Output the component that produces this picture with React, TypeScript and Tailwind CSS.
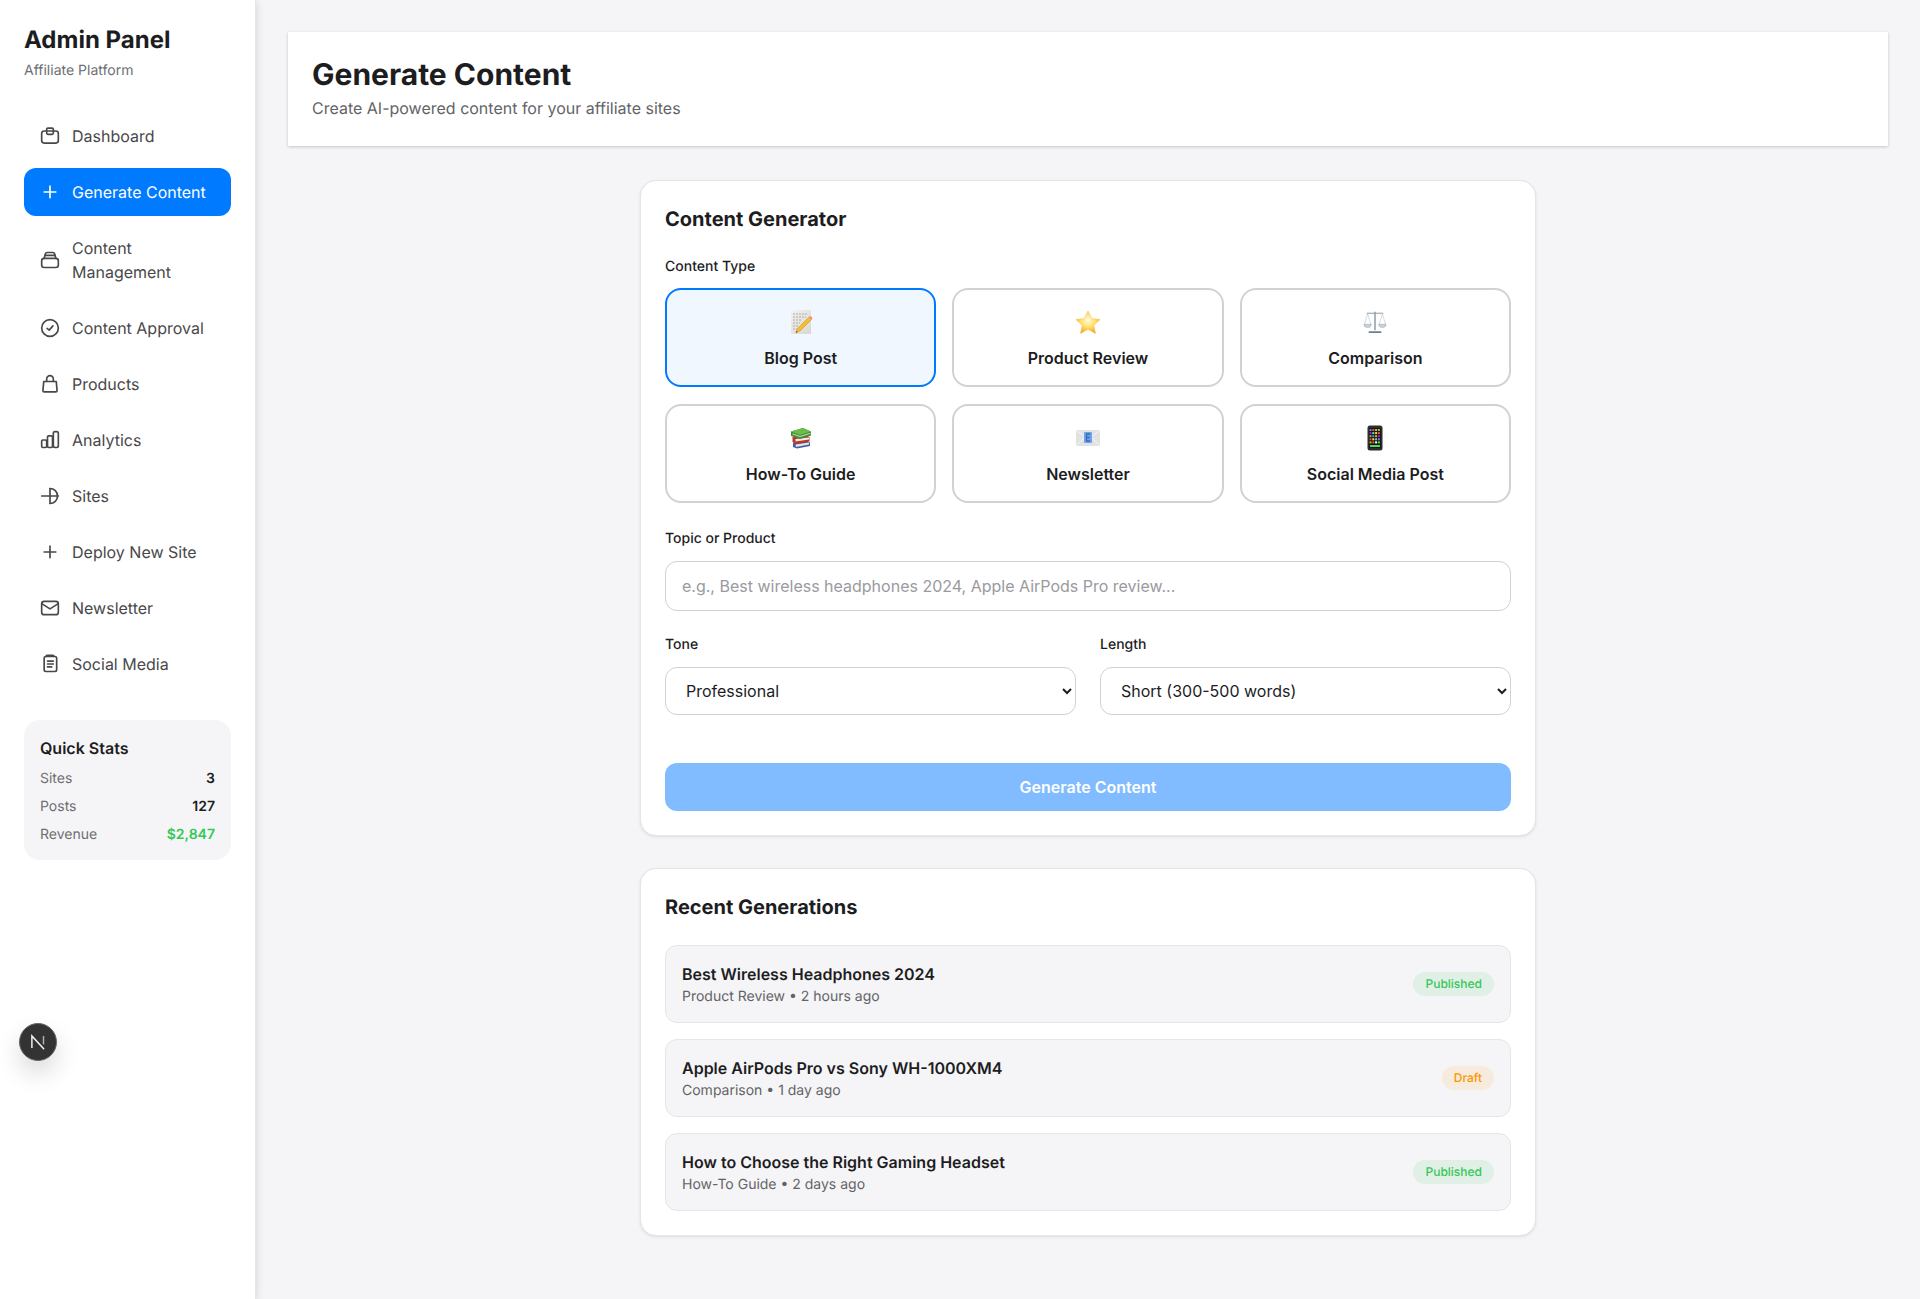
import React from 'react';

const iconProps = {
  width: 20,
  height: 20,
  viewBox: '0 0 24 24',
  fill: 'none',
  stroke: 'currentColor',
  strokeWidth: 2,
  strokeLinecap: 'round' as const,
  strokeLinejoin: 'round' as const,
};

const DashboardIcon = () => (
  <svg {...iconProps}>
    <rect x="2" y="6" width="20" height="14.500" rx="3" />
    <rect x="8" y="2.500" width="8" height="7.500" rx="1.500" />
  </svg>
);
const PlusIcon = () => (
  <svg {...iconProps}>
    <path d="M12 5v14M5 12h14" />
  </svg>
);
const StackIcon = () => (
  <svg {...iconProps}>
    <rect x="2" y="10" width="20" height="11" rx="3" />
    <path d="M5 10l1.500-5.500a2 2 0 0 1 2-1.500h7a2 2 0 0 1 2 1.500L19 10" />
    <path d="M6 6.500h12" />
  </svg>
);
const CheckCircleIcon = () => (
  <svg {...iconProps}>
    <circle cx="12" cy="12" r="10" />
    <path d="M8.500 12.500l2.500 2 4.500-5" />
  </svg>
);
const BagIcon = () => (
  <svg {...iconProps}>
    <path d="M4.500 9h15l1 11a1.500 1.500 0 0 1-1.500 1.500H5A1.500 1.500 0 0 1 3.500 20z" />
    <path d="M8 9V6a4 4 0 0 1 8 0v3" />
  </svg>
);
const BarsIcon = () => (
  <svg {...iconProps}>
    <rect x="2" y="12" width="6" height="9" rx="1.500" />
    <rect x="9" y="7" width="6" height="14" rx="1.500" />
    <rect x="16" y="2" width="6" height="19" rx="2" />
  </svg>
);
const SitesIcon = () => (
  <svg {...iconProps}>
    <path d="M2 12h20" />
    <path d="M12 3v18" />
    <path d="M12 3a9 9 0 0 1 0 18" />
  </svg>
);
const MailIcon = () => (
  <svg {...iconProps}>
    <rect x="2" y="4" width="20" height="16" rx="3" />
    <path d="M2.500 7l9.500 6 9.500-6" />
  </svg>
);
const ClipboardIcon = () => (
  <svg {...iconProps}>
    <rect x="5" y="3" width="15" height="18" rx="2" />
    <path d="M7.500 3V2.500a1 1 0 0 1 1-1h7a1 1 0 0 1 1 1V3" />
    <path d="M9 8.500h7M9 12h7M9 15.500h5" />
  </svg>
);

const BlogEmoji = () => (
  <svg width="24" height="26" viewBox="0 0 24 26">
    <defs>
      <linearGradient id="paper" x1="0" y1="0" x2="1" y2="1">
        <stop offset="0" stopColor="#f4f2ee" />
        <stop offset="1" stopColor="#d9d7d3" />
      </linearGradient>
    </defs>
    <rect x="2" y="1" width="20" height="24" fill="url(#paper)" />
    <path d="M4 5h15M4 8h13M4 11h9M4 14h7M4 17h6M4 20h8" stroke="#9c9c9c" strokeWidth="0.800" strokeDasharray="2 1" />
    <path d="M8.500 19.500l-1.700 4.200 4.200-1.700 11.500-11.500-2.500-2.500z" fill="#f6bd2c" stroke="#c98a12" strokeWidth="0.500" />
    <path d="M20 8l2.500 2.500 1.200-1.300-2.500-2.500z" fill="#ee8a96" />
    <path d="M7.500 21.900l-.7 1.800 1.800-.7z" fill="#333" />
  </svg>
);
const StarEmoji = () => (
  <svg width="26" height="24" viewBox="0 0 26 24">
    <defs>
      <radialGradient id="star" cx="0.500" cy="0.420" r="0.620">
        <stop offset="0" stopColor="#fffbe0" />
        <stop offset="0.500" stopColor="#ffe066" />
        <stop offset="1" stopColor="#f59a0c" />
      </radialGradient>
    </defs>
    <path d="M13 1l3.600 7.600 8.400 1-6.200 5.700 1.700 8.200L13 19.200 5.500 23.500l1.700-8.200L1 9.600l8.400-1z" fill="url(#star)" stroke="#f6bf62" strokeWidth="0.600" strokeLinejoin="round" />
  </svg>
);
const ScalesEmoji = () => (
  <svg width="24" height="24" viewBox="0 0 26 26" fill="none">
    <path d="M13 2v20" stroke="#7d8c9b" strokeWidth="1.400" />
    <path d="M4 3.500h18" stroke="#8f9daa" strokeWidth="1.100" />
    <path d="M7 24h12" stroke="#6f7f8f" strokeWidth="2" strokeLinecap="round" />
    <path d="M5 4L1.500 16M5 4l3.500 12M21 4l-3.500 12M21 4l3.500 12" stroke="#b4bec8" strokeWidth="0.600" />
    <path d="M1 15.500h8a4 3.500 0 0 1-8 0zM17 15.500h8a4 3.500 0 0 1-8 0z" fill="#cbd4dc" stroke="#8a98a6" strokeWidth="0.500" />
  </svg>
);
const BooksEmoji = () => (
  <svg width="22" height="22" viewBox="0 0 22 22">
    <path d="M3 16l14-2 3 1.500V19L7 21.500 3 20z" fill="#3f5fa8" />
    <path d="M5.500 17.500L19 15.500v2L6 20z" fill="#e8e6dc" />
    <path d="M2.500 10l14-1.500 3 1.500v4.500L6 17l-3.500-2z" fill="#c5302a" />
    <path d="M5.500 12L19 10.500v2L5.500 14.500z" fill="#efeee6" />
    <path d="M1 4.500L13 1l8 3.500v4L10 12 1 9z" fill="#3f8f2e" />
    <path d="M1 4.500L13 1l8 3.500L10 8z" fill="#6cbb4c" />
    <path d="M2.500 7l7.500 2.500L20.500 6.300" stroke="#efeee6" strokeWidth="0.800" fill="none" />
  </svg>
);
const EnvelopeEmoji = () => (
  <svg width="26" height="18" viewBox="0 0 26 18">
    <rect x="1" y="1" width="24" height="16" fill="#e0e2e4" />
    <path d="M1 1l12 9 12-9M1 17l8-8M25 17l-8-8" stroke="#f6f6f6" strokeWidth="1" fill="none" />
    <rect x="9" y="3" width="8" height="11" rx="1" fill="#6aa5ee" />
    <path d="M11.200 5h4M11.200 8.500h3.500M11.200 12h4M11.500 5v7" stroke="#3f6aa8" strokeWidth="1.300" fill="none" />
  </svg>
);
const PhoneEmoji = () => (
  <svg width="16" height="26" viewBox="0 0 16 26">
    <rect x="0.500" y="0.500" width="15" height="25" rx="2.500" fill="#2d2d30" />
    <rect x="2" y="3" width="12" height="20" fill="#17171a" />
    {[
      '#4a90e2', '#e24a4a', '#f5a623', '#7ed321',
      '#bd10e0', '#50e3c2', '#f8e71c', '#e2574a',
      '#7ed321', '#4a90e2', '#f5a623', '#bd10e0',
      '#e24a4a', '#f8e71c', '#50e3c2', '#4a90e2',
      '#f5a623', '#e2574a', '#ffffff', '#7ed321',
    ].map((c, i) => (
      <rect key={i} x={2.500 + (i % 4) * 2.800} y={4 + Math.floor(i / 4) * 3.100} width="2" height="2" fill={c} />
    ))}
    <path d="M3 21h10" stroke="#4cd964" strokeWidth="2" />
  </svg>
);
const NextLogo = () => (
  <svg width="22" height="22" viewBox="0 0 18 18" fill="none">
    <path d="M4 14V4l10 11" stroke="#f2f2f2" strokeWidth="1.200" />
    <path d="M13.500 4v7" stroke="#b0b0b0" strokeWidth="1.200" />
  </svg>
);

const navItems = [
  { label: 'Dashboard', icon: <DashboardIcon /> },
  { label: 'Generate Content', icon: <PlusIcon />, active: true },
  { label: 'Content Management', icon: <StackIcon /> },
  { label: 'Content Approval', icon: <CheckCircleIcon /> },
  { label: 'Products', icon: <BagIcon /> },
  { label: 'Analytics', icon: <BarsIcon /> },
  { label: 'Sites', icon: <SitesIcon /> },
  { label: 'Deploy New Site', icon: <PlusIcon /> },
  { label: 'Newsletter', icon: <MailIcon /> },
  { label: 'Social Media', icon: <ClipboardIcon /> },
];

const contentTypes = [
  { label: 'Blog Post', icon: <BlogEmoji />, selected: true },
  { label: 'Product Review', icon: <StarEmoji /> },
  { label: 'Comparison', icon: <ScalesEmoji /> },
  { label: 'How-To Guide', icon: <BooksEmoji /> },
  { label: 'Newsletter', icon: <EnvelopeEmoji /> },
  { label: 'Social Media Post', icon: <PhoneEmoji /> },
];

const recent = [
  { title: 'Best Wireless Headphones 2024', meta: 'Product Review • 2 hours ago', status: 'Published' },
  { title: 'Apple AirPods Pro vs Sony WH-1000XM4', meta: 'Comparison • 1 day ago', status: 'Draft' },
  { title: 'How to Choose the Right Gaming Headset', meta: 'How-To Guide • 2 days ago', status: 'Published' },
];

export default function App() {
  return (
    <div className="relative flex min-h-[1299px] bg-[#f5f5f7] font-['Inter',sans-serif] text-[#1d1d1f] antialiased [text-rendering:geometricPrecision]">
      <aside className="w-64 shrink-0 border-r border-[#e5e5ea] bg-white p-6 shadow-[0_2px_8px_rgba(0,0,0,0.15)]">
        <h1 className="text-2xl font-bold">Admin Panel</h1>
        <p className="mt-1 mb-[31px] text-sm leading-[21px] text-[#6e6e73]">Affiliate Platform</p>

        <nav className="flex flex-col gap-2">
          {navItems.map((item) => (
            <a
              key={item.label}
              className={
                item.active
                  ? 'flex items-center gap-3 rounded-xl bg-[#007aff] px-4 py-3 text-white'
                  : 'flex items-center gap-3 rounded-xl px-4 py-3 text-[#48484a]'
              }
            >
              <span className="shrink-0">{item.icon}</span>
              <span>{item.label}</span>
            </a>
          ))}
        </nav>

        <div className="mt-8 rounded-2xl bg-[#f5f5f7] px-4 pt-4 pb-[15px]">
          <h3 className="mb-2 font-semibold">Quick Stats</h3>
          <div className="flex flex-col gap-[7px] text-sm leading-[21px]">
            <div className="flex justify-between">
              <span className="text-[#6e6e73]">Sites</span>
              <span className="font-semibold">3</span>
            </div>
            <div className="flex justify-between">
              <span className="text-[#6e6e73]">Posts</span>
              <span className="font-semibold">127</span>
            </div>
            <div className="flex justify-between">
              <span className="text-[#6e6e73]">Revenue</span>
              <span className="font-semibold text-[#34c759]">$2,847</span>
            </div>
          </div>
        </div>
      </aside>

      <main className="flex-1 p-8">
        <header className="mb-[34px] bg-white px-6 pt-6 pb-[26px] shadow-[0_1px_3px_rgba(0,0,0,0.2)]">
          <h1 className="text-3xl leading-[38px] font-bold">Generate Content</h1>
          <p className="mt-[2px] text-[#636366]">Create AI-powered content for your affiliate sites</p>
        </header>

        <div className="mx-auto flex max-w-4xl flex-col gap-8">
          <section className="rounded-2xl border border-[#e5e5ea] bg-white p-6 shadow-[0_1px_3px_rgba(0,0,0,0.1)]">
            <h2 className="mb-6 text-xl font-bold">Content Generator</h2>

            <label className="mb-[11px] block text-sm font-medium">Content Type</label>
            <div className="mb-[26px] grid grid-cols-3 gap-x-4 gap-y-[17px]">
              {contentTypes.map((type) => (
                <button
                  key={type.label}
                  className={
                    type.selected
                      ? 'flex h-[99px] flex-col items-center justify-center gap-2 rounded-2xl border-2 border-[#007aff] bg-[#f0f7ff] font-semibold'
                      : 'flex h-[99px] flex-col items-center justify-center gap-2 rounded-2xl border-2 border-[#d1d1d6] bg-white font-semibold'
                  }
                >
                  <span className="flex h-8 items-center justify-center">{type.icon}</span>
                  <span>{type.label}</span>
                </button>
              ))}
            </div>

            <label className="mb-3 block text-sm font-medium">Topic or Product</label>
            <input
              type="text"
              placeholder="e.g., Best wireless headphones 2024, Apple AirPods Pro review..."
              className="mb-6 block h-[50px] w-full rounded-xl border border-[#d1d1d6] px-4 placeholder:text-[#9a9aa0] focus:outline-none"
            />

            <div className="mb-12 grid grid-cols-2 gap-6">
              <div>
                <label className="mb-3 block text-sm font-medium">Tone</label>
                <select className="block h-12 w-full rounded-xl border border-[#d1d1d6] bg-white px-4">
                  <option>Professional</option>
                  <option>Casual</option>
                  <option>Friendly</option>
                </select>
              </div>
              <div>
                <label className="mb-3 block text-sm font-medium">Length</label>
                <select className="block h-12 w-full rounded-xl border border-[#d1d1d6] bg-white px-4">
                  <option>Short (300-500 words)</option>
                  <option>Medium (500-1000 words)</option>
                  <option>Long (1000+ words)</option>
                </select>
              </div>
            </div>

            <button className="h-12 w-full rounded-xl bg-[#80bcff] font-semibold text-white">Generate Content</button>
          </section>

          <section className="rounded-2xl border border-[#e5e5ea] bg-white p-6 shadow-[0_1px_3px_rgba(0,0,0,0.1)]">
            <h2 className="mb-6 text-xl font-bold">Recent Generations</h2>
            <div className="flex flex-col gap-4">
              {recent.map((row) => (
                <div
                  key={row.title}
                  className="flex items-center justify-between rounded-xl border border-[#e5e5ea] bg-[#f5f5f7] p-4"
                >
                  <div className="h-11">
                    <div className="leading-6 font-semibold">{row.title}</div>
                    <div className="text-sm leading-[21px] text-[#636366]">{row.meta}</div>
                  </div>
                  <span
                    className={
                      row.status === 'Published'
                        ? 'rounded-full bg-[#34c7591a] px-3 py-1 text-xs font-medium text-[#34c759]'
                        : 'rounded-full bg-[#ff95001a] px-3 py-1 text-xs font-medium text-[#ff9500]'
                    }
                  >
                    {row.status}
                  </span>
                </div>
              ))}
            </div>
          </section>
        </div>
      </main>

      <div className="absolute top-[1023px] left-[19px] flex h-[38px] w-[38px] items-center justify-center rounded-full border border-[#666] bg-[#333] shadow-[0_12px_24px_rgba(0,0,0,0.15)]">
        <NextLogo />
      </div>
    </div>
  );
}
